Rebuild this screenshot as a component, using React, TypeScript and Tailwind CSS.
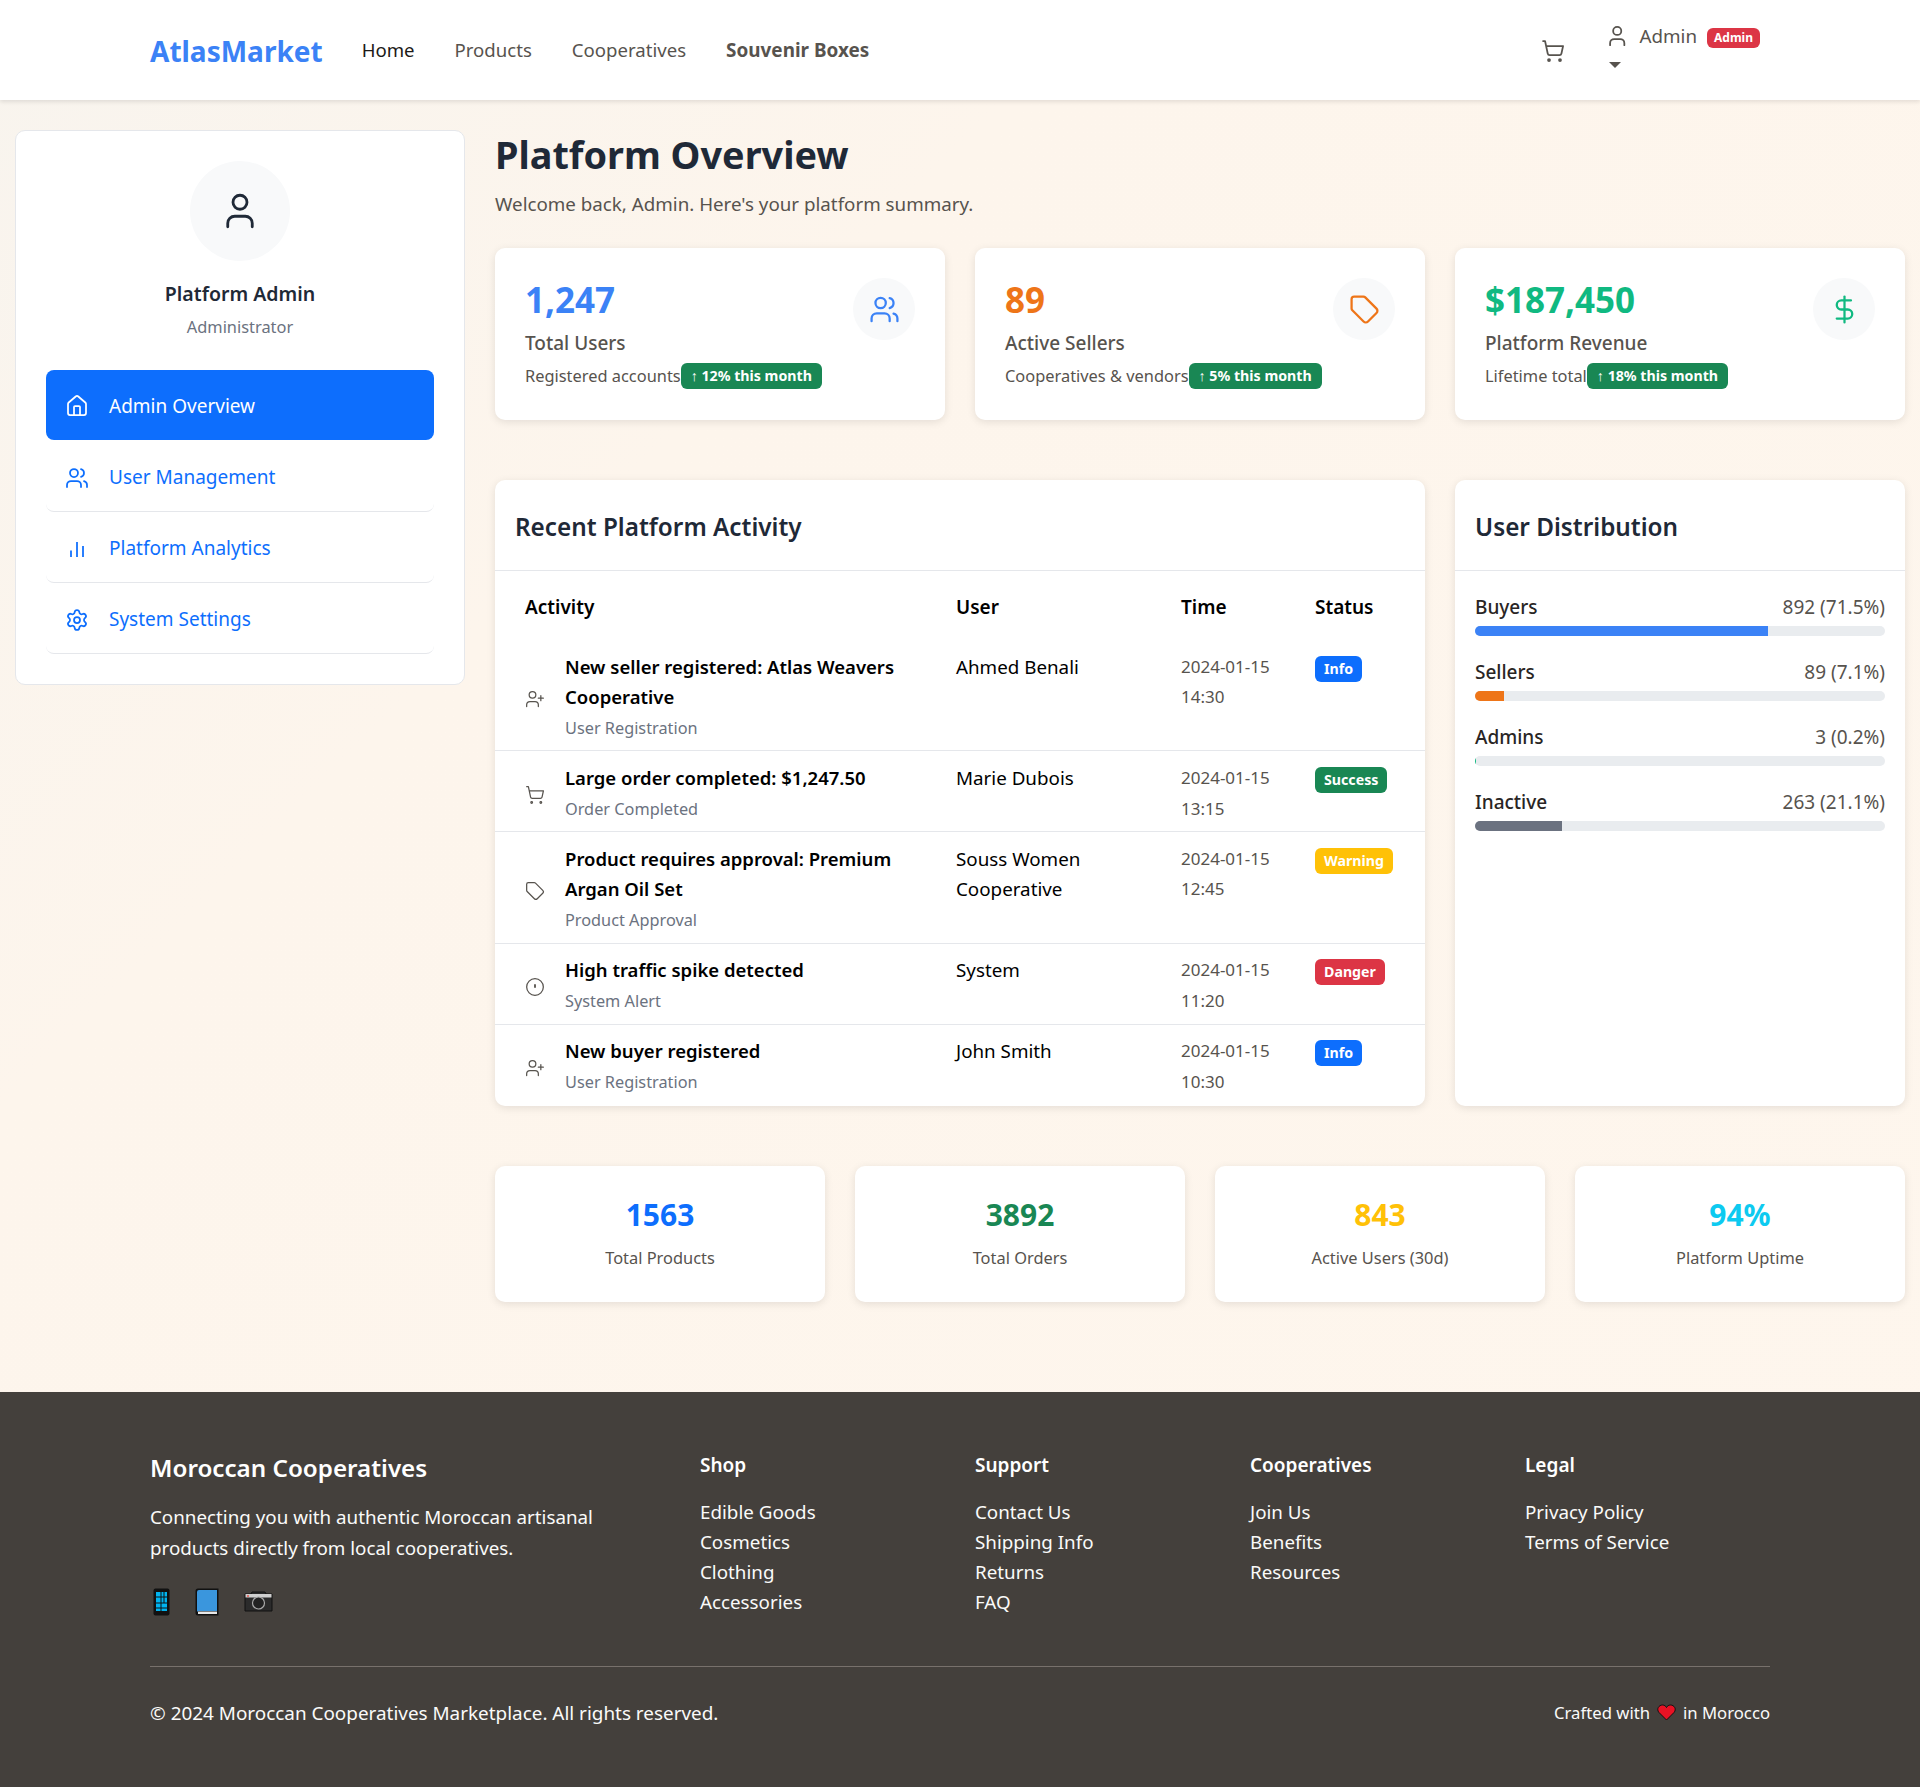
import { DollarSign, House, Settings, ShoppingCart, User, UserPlus, Users } from "lucide-react"

const font = "font-['Noto_Sans','Liberation_Sans',sans-serif]"

type IconProps = { size?: number; strokeWidth?: number; className?: string }

function TagIcon({ size = 24, strokeWidth = 1.75, className }: IconProps) {
  return (
    <svg width={size} height={size} viewBox="0 0 24 24" fill="none" stroke="currentColor" strokeWidth={strokeWidth} strokeLinecap="round" strokeLinejoin="round" className={className}>
      <path d="M12.586 2.586A2 2 0 0 0 11.172 2H4a2 2 0 0 0-2 2v7.172a2 2 0 0 0 .586 1.414l8.704 8.704a2.426 2.426 0 0 0 3.420 0l6.580-6.580a2.426 2.426 0 0 0 0-3.420z" />
    </svg>
  )
}

function AlertIcon({ size = 24, strokeWidth = 1.75, className }: IconProps) {
  return (
    <svg width={size} height={size} viewBox="0 0 24 24" fill="none" stroke="currentColor" strokeWidth={strokeWidth} strokeLinecap="round" className={className}>
      <circle cx="12" cy="12" r="10" />
      <path d="M12 9.500v2.500" strokeWidth={2.200} />
    </svg>
  )
}

function BarsIcon({ size = 24, strokeWidth = 1.75, className }: IconProps) {
  return (
    <svg width={size} height={size} viewBox="0 0 24 24" fill="none" stroke="currentColor" strokeWidth={strokeWidth} className={className}>
      <path d="M6 13.500V20M12 5v15M18 9v11" />
    </svg>
  )
}

const navLinks = [
  { label: "User Management", Icon: Users },
  { label: "Platform Analytics", Icon: BarsIcon },
  { label: "System Settings", Icon: Settings },
]

const stats = [
  { value: "1,247", color: "text-[#3b82f6]", label: "Total Users", sub: "Registered accounts", trend: "↑ 12% this month", Icon: Users },
  { value: "89", color: "text-[#ee7518]", label: "Active Sellers", sub: "Cooperatives & vendors", trend: "↑ 5% this month", Icon: TagIcon },
  { value: "$187,450", color: "text-[#10b981]", label: "Platform Revenue", sub: "Lifetime total", trend: "↑ 18% this month", Icon: DollarSign },
]

const activity = [
  { title: "New seller registered: Atlas Weavers Cooperative", sub: "User Registration", user: "Ahmed Benali", date: "2024-01-15", time: "14:30", status: "Info", badge: "bg-[#0d6efd]", Icon: UserPlus },
  { title: "Large order completed: $1,247.50", sub: "Order Completed", user: "Marie Dubois", date: "2024-01-15", time: "13:15", status: "Success", badge: "bg-[#198754]", Icon: ShoppingCart },
  { title: "Product requires approval: Premium Argan Oil Set", sub: "Product Approval", user: "Souss Women Cooperative", date: "2024-01-15", time: "12:45", status: "Warning", badge: "bg-[#ffc107]", Icon: TagIcon },
  { title: "High traffic spike detected", sub: "System Alert", user: "System", date: "2024-01-15", time: "11:20", status: "Danger", badge: "bg-[#dc3545]", Icon: AlertIcon },
  { title: "New buyer registered", sub: "User Registration", user: "John Smith", date: "2024-01-15", time: "10:30", status: "Info", badge: "bg-[#0d6efd]", Icon: UserPlus },
]

const distribution = [
  { label: "Buyers", value: "892 (71.5%)", width: "w-[71.5%]", color: "bg-[#3b82f6]" },
  { label: "Sellers", value: "89 (7.1%)", width: "w-[7.1%]", color: "bg-[#ee7518]" },
  { label: "Admins", value: "3 (0.2%)", width: "w-[0.2%]", color: "bg-[#10b981]" },
  { label: "Inactive", value: "263 (21.1%)", width: "w-[21.1%]", color: "bg-[#6b7280]" },
]

const totals = [
  { value: "1563", label: "Total Products", color: "text-[#0d6efd]" },
  { value: "3892", label: "Total Orders", color: "text-[#198754]" },
  { value: "843", label: "Active Users (30d)", color: "text-[#ffc107]" },
  { value: "94%", label: "Platform Uptime", color: "text-[#0dcaf0]" },
]

const footerCols = [
  { title: "Shop", links: ["Edible Goods", "Cosmetics", "Clothing", "Accessories"] },
  { title: "Support", links: ["Contact Us", "Shipping Info", "Returns", "FAQ"] },
  { title: "Cooperatives", links: ["Join Us", "Benefits", "Resources"] },
  { title: "Legal", links: ["Privacy Policy", "Terms of Service"] },
]

function PhoneIcon() {
  return (
    <svg width="17" height="28" viewBox="0 0 17 28">
      <rect x="0.500" y="0.500" width="16" height="27" rx="2" fill="#111" />
      <rect x="3" y="4" width="11" height="19" fill="#00b4f0" />
      <path d="M3 9h11M3 15h11M3 20h11M8 4v19M11 4v11" stroke="#111" strokeWidth="1" />
    </svg>
  )
}

function BookIcon() {
  return (
    <svg width="24" height="28" viewBox="0 0 24 28">
      <path d="M3 0.500h20.500v27H3a2.500 2.500 0 0 1-2.500-2.500V3A2.500 2.500 0 0 1 3 0.500z" fill="#111" />
      <path d="M4 2h18v21H4a2 2 0 0 0-2 1V4a2 2 0 0 1 2-2z" fill="#3a96dd" />
      <rect x="3" y="23.500" width="19" height="2.500" fill="#e8e8e8" />
    </svg>
  )
}

function CameraIcon() {
  return (
    <svg width="29" height="21" viewBox="0 0 29 21">
      <path d="M1 3h6l1-2h13l1 2h6v17H1z" fill="#2b2b2b" stroke="#111" />
      <rect x="1.500" y="3" width="26" height="3.500" fill="#cfcfcf" />
      <circle cx="14.500" cy="12" r="6" fill="#222" stroke="#aaa" strokeWidth="1.200" />
      <circle cx="4" cy="5" r="1" fill="#e0564f" />
    </svg>
  )
}

function HeartIcon() {
  return (
    <svg width="19" height="17" viewBox="0 0 19 17">
      <path d="M9.500 16L2 8.500C-1 5 2 1 5.500 1c1.800 0 3.200 1 4 2.500C10.300 2 11.700 1 13.500 1 17 1 20 5 17 8.500z" fill="#e81224" stroke="#111" strokeWidth="1" />
    </svg>
  )
}

export default function App() {
  return (
    <div className={`${font} min-h-[1787px] flex flex-col bg-[linear-gradient(135deg,#f8f4ee,#fdf5ec_30%,#fef6ed)] text-[#1f2937]`}>
      <header className="h-[100px] flex items-center bg-white shadow-[0_2px_4px_rgba(0,0,0,0.1)] px-[150px]">
        <span className="mr-[39px] mt-[1px] text-[28px] font-bold text-[#3b82f6]">AtlasMarket</span>
        <nav className="mt-[1px] flex items-baseline gap-[40px] text-[18.6px] text-[#57534e]">
          <span className="text-[#1c1917]">Home</span>
          <span>Products</span>
          <span>Cooperatives</span>
          <span className="text-[18.9px] font-bold">Souvenir Boxes</span>
        </nav>
        <div className="ml-auto mr-[10px] flex items-center">
          <ShoppingCart size={24} strokeWidth={1.75} className="mr-[40px] mt-[1px] text-[#57534e]" />
          <div className="w-[155px] pb-[12px]">
            <div className="flex items-center gap-[10px] text-[18.8px] text-[#57534e]">
              <User size={26} strokeWidth={1.75} />
              <span className="mt-[2px]">Admin</span>
              <span className="mt-[5px] rounded-[6px] bg-[#dc3545] px-[7px] py-[4px] text-[12px] font-bold leading-none text-white">Admin</span>
            </div>
            <div className="ml-[4px] mt-[11px] h-0 w-0 border-x-[6px] border-t-[6px] border-x-transparent border-t-[#57534e]" />
          </div>
        </div>
      </header>

      <main className="grid grid-cols-[480px_1440px] pb-[90px] pt-[30px]">
        <div className="px-[15px]">
          <aside className="flex flex-col items-center rounded-[10px] border border-[#e5e7eb] bg-white p-[30px]">
            <div className="flex size-[100px] items-center justify-center rounded-full bg-[#f8f9fa]">
              <User size={42} strokeWidth={1.6} />
            </div>
            <h2 className="mt-[18px] text-[19.5px] font-semibold leading-[30px]">Platform Admin</h2>
            <p className="mt-[4px] text-[16.4px] leading-[28px] text-[#6b7280]">Administrator</p>
            <nav className="mt-[29px] w-full text-[19px]">
              <div className="flex h-[70px] items-center gap-[20px] rounded-[8px] bg-[#0d6efd] px-[19px] pt-[2px] text-white">
                <House size={24} strokeWidth={1.75} />
                Admin Overview
              </div>
              <div className="pt-[1px]">
                {navLinks.map(({ label, Icon }) => (
                  <div key={label} className="flex h-[71px] items-center gap-[20px] rounded-[8px] border-b border-[#e5e7eb] px-[19px] pt-[3px] text-[#0d6efd]">
                    <Icon size={24} strokeWidth={1.75} />
                    {label}
                  </div>
                ))}
              </div>
            </nav>
          </aside>
        </div>

        <div className="px-[15px]">
          <h1 className="mt-[1px] text-[37.8px] font-bold leading-[48px]">Platform Overview</h1>
          <p className="mt-[10px] text-[18.75px] leading-[30px] text-[#57534e]">Welcome back, Admin. Here's your platform summary.</p>

          <section className="mt-[29px] grid grid-cols-3 gap-[30px]">
            {stats.map(({ value, color, label, sub, trend, Icon }) => (
              <div key={label} className="flex h-[172px] justify-between rounded-[10px] bg-white p-[30px] shadow-[0_2px_8px_rgba(0,0,0,0.1)]">
                <div>
                  <div className={`mt-[1px] text-[35px] font-bold leading-[42px] ${color}`}>{value}</div>
                  <div className="mt-[7px] text-[19px] font-medium leading-[30px] text-[#57534e]">{label}</div>
                  <div className="mt-[4px] flex items-center whitespace-nowrap text-[16.4px] leading-[28px] text-[#57534e]">
                    {sub}
                    <span className="rounded-[6px] bg-[#198754] px-[10px] py-[6px] text-[14.2px] font-bold leading-none text-white">{trend}</span>
                  </div>
                </div>
                <div className={`flex size-[62px] shrink-0 items-center justify-center rounded-full bg-[#f8f9fa] ${color}`}>
                  <Icon size={31} strokeWidth={1.75} />
                </div>
              </div>
            ))}
          </section>

          <section className="mt-[60px] grid grid-cols-[930px_450px] gap-[30px]">
            <div className="rounded-[10px] bg-white pb-[1.5px] shadow-[0_2px_8px_rgba(0,0,0,0.1)]">
              <h3 className="flex h-[91px] items-center border-b border-[#e5e7eb] px-[20px] pt-[5px] text-[24.3px] font-semibold">Recent Platform Activity</h3>
              <div className="grid h-[68px] grid-cols-[431px_225px_134px_110px] items-center pl-[30px] pt-[4px] text-[19px] font-semibold text-black">
                <span>Activity</span>
                <span>User</span>
                <span>Time</span>
                <span>Status</span>
              </div>
              {activity.map(({ title, sub, user, date, time, status, badge, Icon }, i) => (
                <div key={title} className={`grid grid-cols-[431px_225px_134px_110px] border-t pb-[7px] pl-[30px] pt-[11.5px] text-[18.8px] leading-[30.65px] ${i > 0 ? "border-[#e5e7eb]" : "border-transparent"}`}>
                  <div className="flex items-center gap-[20px]">
                    <Icon size={20} strokeWidth={1.5} className="mt-[3px] shrink-0 text-[#57534e]" />
                    <div className="w-[340px]">
                      <div className="text-[18.5px] font-semibold text-black">{title}</div>
                      <div className="text-[16.3px] text-[#6b7280]">{sub}</div>
                    </div>
                  </div>
                  <div className="w-[170px] text-black">{user}</div>
                  <div className="text-[17px] text-[#57534e]">{date}<br />{time}</div>
                  <div>
                    <span className={`${badge} inline-block rounded-[6px] px-[9px] py-[6px] text-[14.2px] font-bold leading-none text-white`}>{status}</span>
                  </div>
                </div>
              ))}
            </div>

            <div className="rounded-[10px] bg-white shadow-[0_2px_8px_rgba(0,0,0,0.1)]">
              <h3 className="flex h-[91px] items-center border-b border-[#e5e7eb] px-[20px] pt-[5px] text-[24.3px] font-semibold">User Distribution</h3>
              <div className="flex flex-col gap-[21px] px-[20px] pt-[21px] text-[19px]">
                {distribution.map(({ label, value, width, color }) => (
                  <div key={label}>
                    <div className="flex justify-between leading-[30px]">
                      <span className="font-medium text-[#292524]">{label}</span>
                      <span className="text-[#57534e]">{value}</span>
                    </div>
                    <div className="mt-[4px] h-[10px] overflow-hidden rounded-full bg-[#e9ecef]">
                      <div className={`h-full ${width} ${color}`} />
                    </div>
                  </div>
                ))}
              </div>
            </div>
          </section>

          <section className="mt-[60px] grid grid-cols-4 gap-[30px]">
            {totals.map(({ value, label, color }) => (
              <div key={label} className="flex h-[136px] flex-col items-center justify-center rounded-[10px] bg-white shadow-[0_2px_8px_rgba(0,0,0,0.1)]">
                <div className={`text-[30px] font-bold leading-[40px] ${color}`}>{value}</div>
                <div className="mt-[9px] text-[16.4px] leading-[28px] text-[#57534e]">{label}</div>
              </div>
            ))}
          </section>
        </div>
      </main>

      <footer className="flex-1 bg-[#44403c] px-[150px] pt-[60px] text-[#fafaf9]">
        <div className="grid grid-cols-[550px_275px_275px_275px_245px]">
          <div>
            <h4 className="mt-[1px] text-[24.2px] font-semibold leading-[30px] text-white">Moroccan Cooperatives</h4>
            <p className="mt-[19.5px] w-[480px] text-[18.8px] leading-[30.7px]">Connecting you with authentic Moroccan artisanal products directly from local cooperatives.</p>
            <div className="mt-[24px] flex items-center gap-[25px] pl-[3px]">
              <PhoneIcon />
              <BookIcon />
              <CameraIcon />
            </div>
          </div>
          {footerCols.map(({ title, links }) => (
            <div key={title}>
              <h5 className="-mt-[1.5px] text-[19px] font-semibold leading-[30px] text-white">{title}</h5>
              <ul className="mt-[16.5px] text-[18.8px] leading-[30px]">
                {links.map((link) => (
                  <li key={link}>{link}</li>
                ))}
              </ul>
            </div>
          ))}
        </div>
        <div className="mt-[49px] flex items-center justify-between border-t border-[#78716c] pt-[31px] text-[18.9px] leading-[30px]">
          <span>© 2024 Moroccan Cooperatives Marketplace. All rights reserved.</span>
          <span className="flex items-center gap-[7px] text-[16.7px]">Crafted with <HeartIcon /> in Morocco</span>
        </div>
      </footer>
    </div>
  )
}
